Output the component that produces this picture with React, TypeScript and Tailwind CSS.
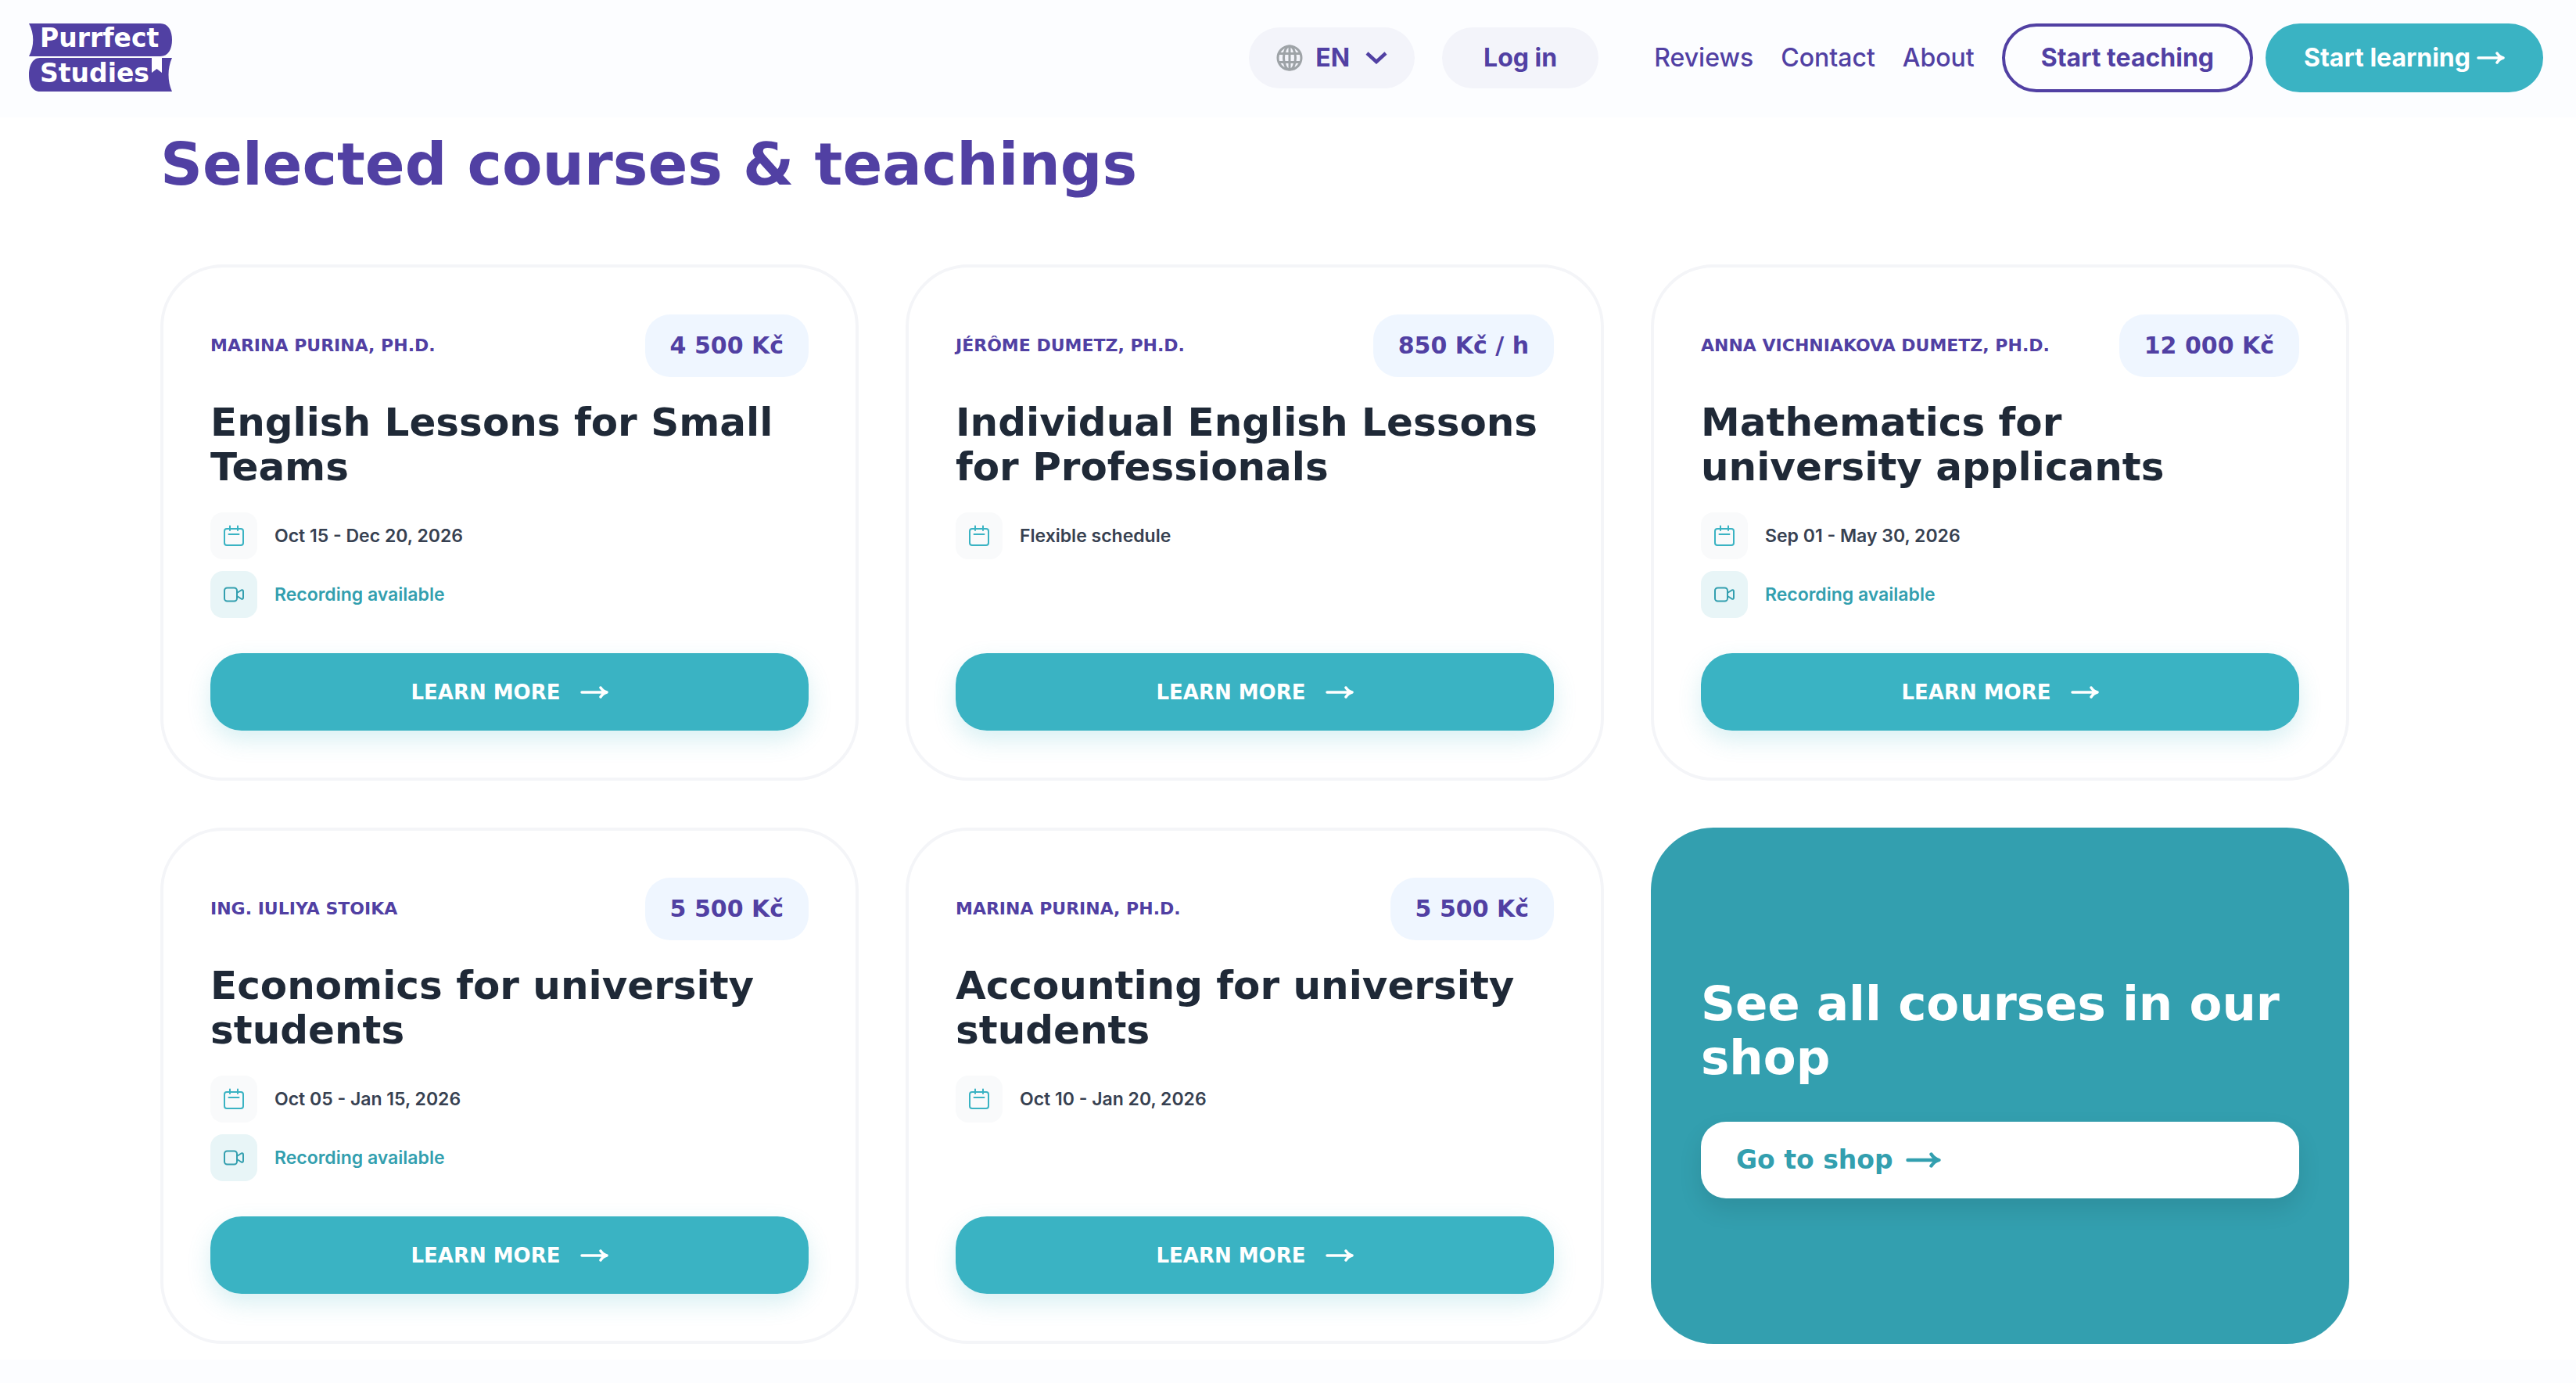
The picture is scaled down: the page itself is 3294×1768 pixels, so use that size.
type Course = {
  author: string;
  price: string;
  title: string;
  schedule: string;
  recording: boolean;
};

const courses: Course[] = [
  {
    author: "Marina Purina, Ph.D.",
    price: "4 500 Kč",
    title: "English Lessons for Small Teams",
    schedule: "Oct 15 - Dec 20, 2026",
    recording: true,
  },
  {
    author: "Jérôme Dumetz, Ph.D.",
    price: "850 Kč / h",
    title: "Individual English Lessons for Professionals",
    schedule: "Flexible schedule",
    recording: false,
  },
  {
    author: "Anna Vichniakova Dumetz, Ph.D.",
    price: "12 000 Kč",
    title: "Mathematics for university applicants",
    schedule: "Sep 01 - May 30, 2026",
    recording: true,
  },
  {
    author: "Ing. Iuliya Stoika",
    price: "5 500 Kč",
    title: "Economics for university students",
    schedule: "Oct 05 - Jan 15, 2026",
    recording: true,
  },
  {
    author: "Marina Purina, Ph.D.",
    price: "5 500 Kč",
    title: "Accounting for university students",
    schedule: "Oct 10 - Jan 20, 2026",
    recording: false,
  },
];

const links = ["Reviews", "Contact", "About"];

function Logo() {
  return (
    <a href="#home" aria-label="Purrfect Studies">
      <svg width="184" height="88" viewBox="0 0 184 88" className="font-['DejaVu_Sans',sans-serif] font-bold">
        <path d="M0 0H168C178 0 183 9 183 21S178 42 168 42H0C7 29 7 13 0 0Z" fill="#5140a3" />
        <path d="M14 44H183C177 57 177 74 183 87H14C4 87 0 77 0 66S4 44 14 44Z" fill="#5140a3" />
        <path d="M157 44H170V63L163.500 58L157 63Z" fill="#fff" />
        <text x="14" y="30" fontSize="33" fill="#fff">
          Purrfect
        </text>
        <text x="14" y="75" fontSize="33" fill="#fff">
          Studies
        </text>
      </svg>
    </a>
  );
}

function GlobeIcon() {
  return (
    <svg width="34" height="34" viewBox="0 0 34 34" fill="none" stroke="#9ea3a7" strokeWidth="3">
      <circle cx="17" cy="17" r="15" />
      <ellipse cx="17" cy="17" rx="7.500" ry="15" />
      <path d="M17 2V32M3.500 11.500H30.500M3.500 22.500H30.500" />
    </svg>
  );
}

function ChevronIcon() {
  return (
    <svg width="28" height="16" viewBox="0 0 28 16" fill="none" stroke="currentColor" strokeWidth="4.500">
      <path d="M2 2L14 13L26 2" />
    </svg>
  );
}

function ArrowIcon({ className }: { className: string }) {
  return (
    <svg viewBox="0 0 36 16" className={className} fill="none" stroke="currentColor" strokeWidth="3.500" strokeLinecap="round" strokeLinejoin="round">
      <path d="M2 8H33M26 2C28 5 30 7 34 8C30 9 28 11 26 14" />
    </svg>
  );
}

function CalendarIcon() {
  return (
    <svg width="28" height="28" viewBox="0 0 28 28" fill="none" stroke="#3ab3c3" strokeWidth="2" strokeLinecap="round" strokeLinejoin="round">
      <rect x="2" y="5" width="24" height="21" rx="3" />
      <path d="M9 1.500V7M19 1.500V7M7.500 12H20.500" />
    </svg>
  );
}

function VideoIcon() {
  return (
    <svg width="28" height="28" viewBox="0 0 28 28" fill="none" stroke="#339faf" strokeWidth="2" strokeLinecap="round" strokeLinejoin="round">
      <rect x="2" y="5.500" width="16" height="17" rx="3.500" />
      <path d="M18 12L23.500 8.500Q26 7.500 26 10V18Q26 20.500 23.500 19.500L18 16" />
    </svg>
  );
}

function Header() {
  return (
    <header className="flex h-[150px] items-center justify-between bg-[#fcfdff] pr-[42px] pb-[2px] pl-[37px] text-[32px] leading-[40px] text-[#5140a3]">
      <Logo />

      <nav className="flex items-center gap-[35px]">
        <button type="button" className="flex h-[78px] items-center rounded-full bg-[#f3f4fa] px-[35px] font-bold">
          <GlobeIcon />
          <span className="mr-5 ml-4">EN</span>
          <ChevronIcon />
        </button>
        <a href="#login" className="mr-[36px] flex h-[78px] items-center rounded-full bg-[#f3f4fa] px-[53px] font-bold">
          Log in
        </a>
        {links.map((label) => (
          <a key={label} href="#" className="font-medium">
            {label}
          </a>
        ))}
        <div className="flex gap-4">
          <a href="#teach" className="flex h-[88px] items-center rounded-full border-4 border-[#5140a3] px-[46px] font-bold">
            Start teaching
          </a>
          <a href="#learn" className="flex h-[88px] items-center gap-2 rounded-full bg-[#3ab3c3] px-[49px] font-bold text-white">
            Start learning
            <ArrowIcon className="h-4 w-9" />
          </a>
        </div>
      </nav>
    </header>
  );
}

function CourseCard({ course }: { course: Course }) {
  return (
    <article className="flex flex-col rounded-[80px] border-4 border-[#f4f5f8] p-[60px]">
      <div className="flex items-center justify-between font-['DejaVu_Sans',sans-serif] font-bold text-[#5140a3]">
        <p className="text-[22px] leading-[32px] uppercase">{course.author}</p>
        <p className="rounded-[32px] bg-[#eff6ff] px-8 py-5 text-[30px] leading-[40px]">{course.price}</p>
      </div>

      <h3 className="mt-[30px] pr-2 font-['DejaVu_Sans',sans-serif] text-[50px] leading-[57px] font-bold text-[#1f2937]">
        {course.title}
      </h3>

      <ul className="mt-[29px] mb-[45px] space-y-[15px] text-[23px] leading-[32px] font-semibold">
        <li className="flex items-center gap-[22px] text-[#374151]">
          <span className="flex size-[60px] items-center justify-center rounded-2xl bg-[#f9fafb]">
            <CalendarIcon />
          </span>
          {course.schedule}
        </li>
        {course.recording && (
          <li className="flex items-center gap-[22px] text-[#339faf]">
            <span className="flex size-[60px] items-center justify-center rounded-2xl bg-[#e8f5f7]">
              <VideoIcon />
            </span>
            Recording available
          </li>
        )}
      </ul>

      <a
        href="#course"
        className="mt-auto flex h-[99px] items-center justify-center gap-[25px] rounded-[40px] bg-[#3ab3c3] font-['DejaVu_Sans',sans-serif] text-[26px] leading-[32px] font-bold text-white uppercase shadow-[0_12px_30px_rgba(58,179,195,0.2)]"
      >
        Learn more
        <ArrowIcon className="h-4 w-9" />
      </a>
    </article>
  );
}

function ShopCard() {
  return (
    <article className="flex flex-col justify-center rounded-[80px] bg-[#339faf] px-[64px] pt-[3px] font-['DejaVu_Sans',sans-serif] font-bold">
      <h3 className="text-[61px] leading-[69px] text-white">See all courses in our shop</h3>
      <a
        href="#shop"
        className="mt-12 flex h-[98px] items-center gap-4 rounded-[32px] bg-white px-[45px] text-[33px] leading-[40px] text-[#339faf] shadow-[0_14px_30px_rgba(0,0,0,0.1)]"
      >
        Go to shop
        <ArrowIcon className="h-5 w-[45px]" />
      </a>
    </article>
  );
}

export default function App() {
  return (
    <div className="min-h-screen bg-[#fcfdff] font-[Inter,sans-serif]">
      <Header />
      <main className="bg-white pt-[15px] pr-[290px] pb-5 pl-[205px]">
        <h2 className="font-['DejaVu_Sans',sans-serif] text-[75px] leading-[90px] font-bold text-[#5140a3]">
          Selected courses &amp; teachings
        </h2>
        <div className="mt-[83px] grid grid-cols-3 gap-[60px]">
          {courses.map((course) => (
            <CourseCard key={course.title} course={course} />
          ))}
          <ShopCard />
        </div>
      </main>
    </div>
  );
}
